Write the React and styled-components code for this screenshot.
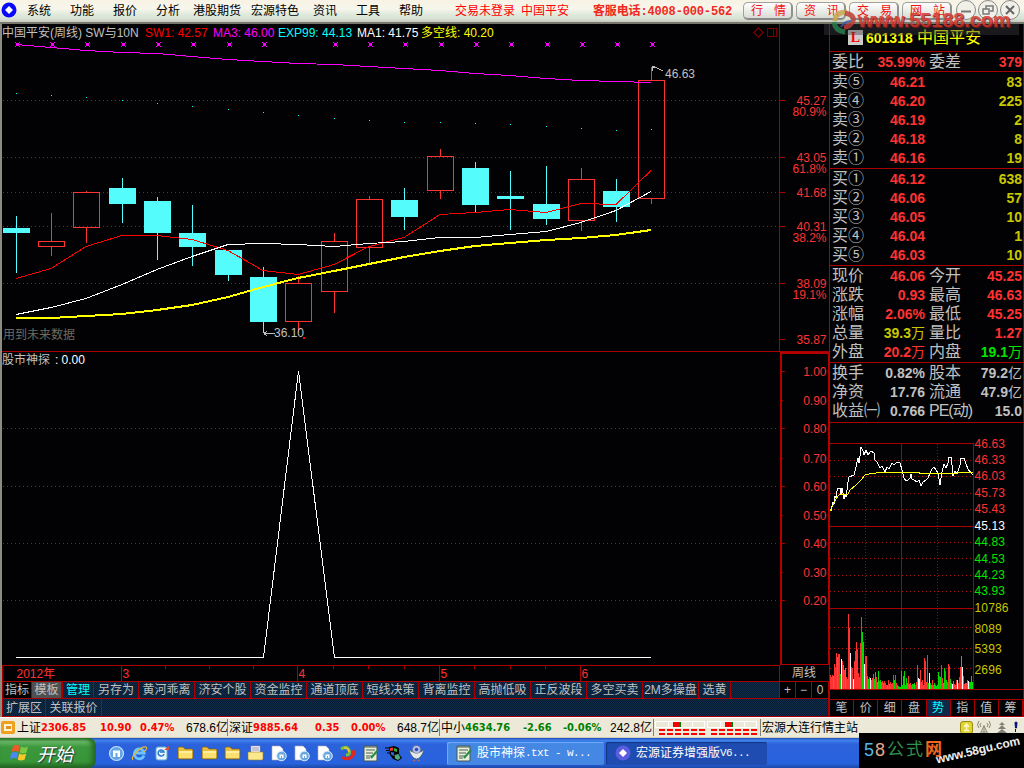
import React from 'react';
import styled, { createGlobalStyle } from 'styled-components';

const MENUS = [
  ['系统', 43],
  ['功能', 43],
  ['报价', 43],
  ['分析', 37],
  ['港股期货', 58],
  ['宏源特色', 62],
  ['资讯', 43],
  ['工具', 43],
  ['帮助', 56],
];

const CENTERS = [
  16, 51, 86, 122, 157, 192, 228, 263, 298, 334, 369, 404, 440, 475, 510, 546,
  581, 616, 651,
];

// [direction, high, body top, body bottom, low]
const CANDLES = [
  ['down', 216, 228, 233, 273],
  ['up', 213, 241, 247, 256],
  ['up', 191, 192, 228, 243],
  ['down', 178, 188, 204, 223],
  ['down', 197, 201, 233, 260],
  ['down', 205, 233, 247, 266],
  ['down', 250, 250, 275, 281],
  ['down', 267, 277, 322, 333],
  ['up', 276, 283, 322, 333],
  ['up', 233, 241, 292, 313],
  ['up', 196, 199, 248, 263],
  ['down', 188, 200, 217, 230],
  ['up', 149, 156, 191, 199],
  ['down', 162, 168, 205, 212],
  ['down', 171, 196, 199, 230],
  ['down', 166, 204, 219, 225],
  ['up', 168, 179, 221, 231],
  ['down', 179, 191, 207, 222],
  ['up', 67, 80, 199, 204],
];

const SW1 = [
  278.5, 268.5, 246.5, 235.5, 235.5, 239.5, 250.5, 270.5, 274.5, 264.5, 246.5,
  237.5, 214.5, 212.5, 209.5, 212.5, 203.5, 204.5, 170.5,
];
const MA1 = [
  314.5, 307.5, 298.5, 284.5, 269.5, 256.5, 244.5, 243.5, 244.5, 246.5, 243.5,
  241.5, 237.5, 237.5, 234.5, 231.5, 222.5, 210.5, 191.5,
];
const DUOKONG = [
  318, 318, 316, 314, 310, 305, 297, 287, 278, 271, 264, 257, 251, 246, 243,
  240, 238, 235, 230,
];
const MA3 = [
  44.5, 47.5, 50.5, 52.5, 53.5, 56.5, 59.5, 61.5, 63.5, 64.5, 66.5, 68.5, 70.5,
  73.5, 75.5, 78.5, 80.5, 81.5, 82.5,
];
const EXP99 = [
  94, 96, 98, 101, 104, 107, 110, 113, 116, 119, 121, 123, 123, 124, 125, 127,
  129, 131, 130,
];

const PRICE_TICKS = [
  [100, '45.27', '80.9%'],
  [157, '43.05', '61.8%'],
  [192, '41.68', ''],
  [226, '40.31', '38.2%'],
  [283, '38.09', '19.1%'],
  [339, '35.87', ''],
];

const SIGNAL_TICKS = [
  [371, '1.00'],
  [400, '0.90'],
  [428, '0.80'],
  [458, '0.70'],
  [486, '0.60'],
  [515, '0.50'],
  [543, '0.40'],
  [572, '0.30'],
  [600, '0.20'],
];

const TABS = [
  '另存为',
  '黄河乖离',
  '济安个股',
  '资金监控',
  '通道顶底',
  '短线决策',
  '背离监控',
  '高抛低吸',
  '正反波段',
  '多空买卖',
  '2M多操盘',
  '选黄',
];
const TAB_WIDTHS = { 另存为: 45, 选黄: 32 };

const SELLS = [
  ['卖⑤', '46.21', '83'],
  ['卖④', '46.20', '225'],
  ['卖③', '46.19', '2'],
  ['卖②', '46.18', '8'],
  ['卖①', '46.16', '19'],
];
const BUYS = [
  ['买①', '46.12', '638'],
  ['买②', '46.06', '57'],
  ['买③', '46.05', '10'],
  ['买④', '46.04', '1'],
  ['买⑤', '46.03', '10'],
];
const RED = '#ff3232';
const GRAY = '#c0c0c0';
const OLIVE = '#c8c800';
const QUOTES = [
  ['现价', '46.06', RED, '今开', '45.25', RED],
  ['涨跌', '0.93', RED, '最高', '46.63', RED],
  ['涨幅', '2.06%', RED, '最低', '45.25', RED],
  ['总量', '39.3万', OLIVE, '量比', '1.27', RED],
  ['外盘', '20.2万', RED, '内盘', '19.1万', '#00e600'],
];
const BASICS = [
  ['换手', '0.82%', GRAY, '股本', '79.2亿', GRAY],
  ['净资', '17.76', GRAY, '流通', '47.9亿', GRAY],
  ['收益㈠', '0.766', GRAY, 'PE(动)', '15.0', GRAY],
];

const MINUTE_PRICE =
  '829,518 830,510 831,511 833,502 834,504 835,496 836,498 837,491 838,488 840,488 841,494 842,488 843,493 844,499 845,495 846,497 847,490 848,482 849,477 854,475 856,467 857,462 858,458 859,463 860,456 861,447 863,451 864,455 866,450 868,455 871,451 874,453 875,460 877,462 880,468 882,466 885,472 887,467 889,469 892,463 894,465 897,462 900,463 902,470 904,478 906,481 908,480 910,478 911,474 912,479 914,480 917,482 919,480 921,486 923,482 926,480 928,478 930,473 932,469 934,467 936,470 938,473 940,485 942,472 944,464 946,468 948,463 949,457 951,457 952,465 953,476 955,471 957,474 960,465 961,458 964,458 966,464 968,469 971,473 973,475';
const MINUTE_AVG =
  '829,513 833,505 836,499 839,495 844,494 848,494 850,490 856,485 861,480 865,475 871,473.5 882,472.5 919,472.5 920,473.5 957,473.5 958,472.5 973,472.5';

const MINUTE_TICKS = [
  [443, '46.63', RED],
  [459, '46.33', RED],
  [475, '46.03', RED],
  [492, '45.73', RED],
  [508, '45.43', RED],
  [525, '45.13', '#fff'],
  [541, '44.83', '#00e600'],
  [558, '44.53', '#00e600'],
  [574, '44.23', '#00e600'],
  [590, '43.93', '#00e600'],
  [607, '10786', OLIVE],
  [628, '8089', OLIVE],
  [648, '5393', OLIVE],
  [669, '2696', OLIVE],
];

const VOLUMES =
  'g18 r14 r12 r14 g13 r25 r22 r36 g32 r35 r35 g15 w30 r28 g24 r19 g21 r12 r10 r75 r61 w36 r22 r21 w10 r28 r38 r47 r40 r16 r12 r46 r72 g57 g47 w25 r33 r33 g13 g10 r12 w11 g9 r11 r15 g10 g17 r12 g7 g18 r8 g9 g7 r8 g6 r8 r6 r4 g4 r9 g5 r7 r5 r6 r14 g9 r14 r6 r4 g3 g2 g2 g18 g4 g13 g18 g4 g11 g6 r13 g5 r6 r4 g5 r5 g6 r4 r7 r24 w11 w10 r19 g7 r9 g4 r31 r28 r7 r34 g6 w16 g6 g4 r9 r4 g6 g4 g3 g4 g17 r13 g12 r24 r11 g6 g21 r18 g9 r7 r25 r23 g10 g6 w5 g8 r5 g4 r9 w9 r6 r12 r22 g33 w22 g13 r5 g6 r6 g9 w8 g7 g7 g13 g7'.split(
    ' ',
  );
const VOLUME_COLORS = { r: RED, g: '#00dc00', w: '#ffffff' };

const points = values => values.map((y, i) => `${CENTERS[i]},${y}`).join(' ');

function MainChart() {
  return (
    <Chart width="827" height="327" viewBox="2 24 827 327">
      {PRICE_TICKS.slice(0, 5).map(([y]) => (
        <Dots key={y} x1="3" x2="779" y1={y + 0.5} y2={y + 0.5} />
      ))}
      {CANDLES.map(([dir, high, top, bottom, low], i) => {
        const x = CENTERS[i];
        if (dir === 'down') {
          return (
            <g key={x} fill="#54fcfc">
              <rect x={x} y={high} width="1" height={low - high} />
              <rect x={x - 13} y={top} width="27" height={bottom - top} />
            </g>
          );
        }
        return (
          <g key={x} fill={RED}>
            <rect x={x} y={high} width="1" height={top - high} />
            <rect x={x} y={bottom} width="1" height={low - bottom} />
            <rect
              x={x - 12.5}
              y={top + 0.5}
              width="26"
              height={bottom - top - 1}
              fill="none"
              stroke={RED}
            />
          </g>
        );
      })}
      {CENTERS.map((x, i) => (
        <rect key={x} x={x} y={EXP99[i] - 1} width="1" height="1" fill="#0ff" />
      ))}
      {CENTERS.filter(x => x !== 298).map(x => (
        <g key={x} fill="#f0f">
          <rect x={x} y="43" width="3" height="3" />
          <path d="M-1 -1h1v1h-1zM3 -1h1v1h-1zM-1 3h1v1h-1zM3 3h1v1h-1z" transform={`translate(${x} 43)`} />
        </g>
      ))}
      <Line points={points(MA3)} stroke="#f0f" />
      <Line points={points(SW1)} stroke="#f00" />
      <Line points={points(MA1)} stroke="#fff" />
      <Line points={points(DUOKONG)} stroke="#ff0" strokeWidth="2" />
      <path d="M652.500 71v-4l2.500-1M652 67l5 1 6 3" fill="none" stroke={GRAY} />
      <ChartText x="665" y="78" fill={GRAY}>46.63</ChartText>
      <path d="M264 333.500h11M264 333.500l3-2.500M264 333.500l3 2.500" fill="none" stroke={GRAY} />
      <ChartText x="274" y="337" fill={GRAY}>36.10</ChartText>
      <rect x="303" y="337" width="2" height="2" fill="#f00" />
      <ChartText x="3" y="338.500" fill="#6c6c60">用到未来数据</ChartText>
      <path d="M758.500 28l4.500 4.500-4.500 4.500-4.500-4.500zM767.500 28.500h9v8h-9zM773.500 28v9" fill="none" stroke="#700000" />
      <rect x="779" y="24" width="1" height="327" fill="#a80000" />
      {PRICE_TICKS.map(([y, price, percent]) => (
        <g key={y} fill={RED}>
          <rect x="780" y={y} width="5" height="1" fill="#a80000" />
          <ChartText x="826.500" y={y + 5} textAnchor="end">{price}</ChartText>
          <ChartText x="826.500" y={y + 16} textAnchor="end">{percent}</ChartText>
        </g>
      ))}
    </Chart>
  );
}

function SignalChart() {
  return (
    <Chart width="827" height="314" viewBox="2 351 827 314">
      <rect x="2" y="351" width="827" height="1" fill="#a80000" />
      {[428, 486, 543, 600].map(y => (
        <Dots key={y} x1="3" x2="779" y1={y + 0.5} y2={y + 0.5} />
      ))}
      <ChartText x="2" y="364" fill={GRAY}>股市神探</ChartText>
      <ChartText x="55" y="364" fill="#fff">:</ChartText>
      <ChartText x="61.500" y="364" fill="#fff">0.00</ChartText>
      <Line points="16,657.5 263.5,657.5 298.5,371 334.5,657.5 651,657.5" stroke="#fff" />
      <rect x="781" y="353" width="48" height="312" fill="none" stroke="#b40000" strokeWidth="2" />
      {SIGNAL_TICKS.map(([y, label], i) => (
        <g key={y} fill={RED}>
          <rect x="782" y={y} width={i % 2 ? 1 : 3} height="1" fill="#a80000" />
          <ChartText x="826.500" y={y + 5} textAnchor="end">{label}</ChartText>
        </g>
      ))}
    </Chart>
  );
}

function TimeAxis() {
  return (
    <Chart width="777" height="16" viewBox="2 665 777 16">
      <path d="M2 665.500h777M2.500 665v16M121.500 665v16M297.500 665v16M439.500 665v16M580.500 665v16M165.500 665v4M209.500 665v4M253.500 665v4M333.500 665v4M368.500 665v4M404.500 665v4M474.500 665v4M510.500 665v4M545.500 665v4" stroke="#a80000" />
      <ChartText x="16.500" y="678" fill={RED}>2012年</ChartText>
      <ChartText x="122.500" y="678" fill={RED}>3</ChartText>
      <ChartText x="298.500" y="678" fill={RED}>4</ChartText>
      <ChartText x="440.500" y="678" fill={RED}>5</ChartText>
      <ChartText x="581.500" y="678" fill={RED}>6</ChartText>
    </Chart>
  );
}

function MinuteChart() {
  return (
    <Chart width="193" height="276" viewBox="830 423 193 276">
      {[460, 476, 493, 509, 542, 558, 575, 591, 627, 648, 668].map(y => (
        <Dots key={y} x1="830" x2="973" y1={y + 0.5} y2={y + 0.5} />
      ))}
      <path d="M865.500 444v245M937.500 444v245" stroke="#a80000" strokeDasharray="1 2" />
      <path d="M829 443.500h145M829 526.500h145M829 608.500h145M829 689.500h194M901.500 443v246M973.500 443v246" stroke="#a80000" />
      {VOLUMES.map((bar, i) => (
        <rect
          key={i}
          x={829 + i}
          y={689 - bar.slice(1)}
          width="1"
          height={bar.slice(1)}
          fill={VOLUME_COLORS[bar[0]]}
        />
      ))}
      <Line points={MINUTE_PRICE} stroke="#fff" />
      <Line points={MINUTE_AVG} stroke="#ff0" />
      {MINUTE_TICKS.map(([y, label, color]) => (
        <ChartText key={y} x="974.500" y={y + 5} fill={color} textLength={label.length * 6.8 - (label.includes('.') ? 3.5 : 0)}>
          {label}
        </ChartText>
      ))}
    </Chart>
  );
}

function Amount({ color, children }) {
  const unit = children.match(/[万亿]$/);
  return (
    <Value $color={color}>
      {unit ? children.slice(0, -1) : children}
      {unit && <Unit>{unit[0]}</Unit>}
    </Value>
  );
}

function QuoteBlock({ rows, pad = 1 }) {
  return (
    <Block $pad={pad}>
      {rows.map(([a, b, bColor, c, d, dColor]) => (
        <QuoteRow key={a}>
          <Label>{a}</Label>
          <Amount color={bColor}>{b}</Amount>
          <Label $tight={c.startsWith('PE')}>{c}</Label>
          <Amount color={dColor}>{d}</Amount>
        </QuoteRow>
      ))}
    </Block>
  );
}

function DepthBlock({ rows }) {
  return (
    <Block $pad={1}>
      {rows.map(([name, price, volume]) => (
        <QuoteRow key={name}>
          <Label>{name}</Label>
          <Value $color={RED}>{price}</Value>
          <span />
          <Value $color={OLIVE}>{volume}</Value>
        </QuoteRow>
      ))}
    </Block>
  );
}

function Folder() {
  return (
    <svg width="17" height="16" viewBox="0 0 17 16">
      <path d="M1 4V3l1-1h4l2 2h7l1 1v8l-1 1H2l-1-1z" fill="#e8bd3c" stroke="#806010" strokeWidth=".7" />
      <path d="M2 6h13v7H2z" fill="#fff0a0" />
      <path d="M2 8h13v5H2z" fill="#fbe070" />
    </svg>
  );
}

function DocIcon() {
  return (
    <svg width="17" height="17" viewBox="0 0 17 17">
      <path d="M2 1h8l3 3v11H2z" fill="#fff" stroke="#aab" strokeWidth=".6" />
      <circle cx="11.500" cy="11" r="4.800" fill="#6aa8e0" stroke="#d8ecff" />
      <path d="M9.500 13V9.500h4V13h-1.500v-2h-1v2z" fill="#fff" />
    </svg>
  );
}

function NoteIcon() {
  return (
    <svg width="16" height="17" viewBox="0 0 16 17">
      <path d="M1 1h13v15H1z" fill="#e8eedc" stroke="#455" />
      <path d="M1 2h13M3 5h9M3 8h7M3 11h7M3 13h4" stroke="#486050" strokeWidth="1.200" />
      <path d="M8 13l7-8" stroke="#2a8a40" strokeWidth="2" />
    </svg>
  );
}

function BirdIcon() {
  return (
    <svg width="17" height="17" viewBox="0 0 17 17">
      <path d="M1 4q2 3 4 3h7q2 0 4-3-1 5-3 7-2 3-4.500 3T4 11Q2 9 1 4z" fill="#e4e8ea" stroke="#466" strokeWidth=".8" />
      <circle cx="8.500" cy="4.500" r="4" fill="#b8c0e8" stroke="#667" strokeWidth=".5" />
      <circle cx="8.500" cy="4.500" r="1.800" fill="#3448c0" />
      <path d="M5 15.500h2.500M9.500 15.500H12" stroke="#c06040" strokeWidth="1.500" />
    </svg>
  );
}

function QuickLaunch() {
  return (
    <Quick>
      <svg width="17" height="17" viewBox="0 0 17 17">
        <circle cx="8.500" cy="8.500" r="7" fill="#64a4e4" stroke="#c0e0ff" strokeWidth="1.200" />
        <path d="M5 12V5.500h7V12H9.500V8h-2v4z" fill="#fff" />
      </svg>
      <svg width="17" height="17" viewBox="0 0 17 17">
        <path d="M13 10.500A5 5 0 1 1 13.200 8H5" fill="none" stroke="#6cc4ff" strokeWidth="2.800" />
        <path d="M2 15C-1 12 10 1 15 2c2 1-1 4-2 5" fill="none" stroke="#e8b830" strokeWidth="1.200" />
      </svg>
      <svg width="17" height="17" viewBox="0 0 17 17">
        <rect x="2" y="2" width="11" height="13" rx="2" fill="#e8f4ff" stroke="#6ac" />
        <path d="M10 9a3 3 0 1 1 0-2H6" fill="none" stroke="#2878c8" strokeWidth="1.500" />
        <path d="M10 5l5-4v4z" fill="#e05030" />
      </svg>
      <Folder />
      <Folder />
      <Folder />
      <svg width="17" height="17" viewBox="0 0 17 17">
        <path d="M4 1h9v8H4z" fill="#fff" stroke="#99a" strokeWidth=".6" />
        <path d="M5 3h7M5 5h7" stroke="#88a" />
        <path d="M1 7h15v7l-1 1H2l-1-1z" fill="#fbe88c" stroke="#a08030" strokeWidth=".6" />
      </svg>
      <DocIcon />
      <DocIcon />
      <DocIcon />
      <svg width="17" height="17" viewBox="0 0 17 17" fill="none" strokeWidth="3">
        <path d="M2 4q6-4 8 1t-3 5" stroke="#7ac040" />
        <path d="M14 5q2 6-3 8t-8-1" stroke="#e02820" />
        <path d="M5 3q5 0 5 4" stroke="#f0d030" strokeWidth="1.500" />
      </svg>
      <NoteIcon />
      <svg width="17" height="17" viewBox="0 0 17 17">
        <path d="M0 3h4M1 5.500h3M2 8h3" stroke="#000" strokeWidth="1.200" />
        <path d="M4 2l5-1 5 2v6l3 4-4 3-5-2-3-4z" fill="#000" />
        <path d="M5 3l3-.5v3L5 6z" fill="#f03820" />
        <path d="M9 3l3 1v3L9 6z" fill="#30b040" />
        <path d="M6 7l3 .5V11L6 9.500z" fill="#3060f0" />
        <path d="M9.500 10l4-1 2 4-2.500 2-3-1.500z" fill="#50a880" />
      </svg>
      <BirdIcon />
    </Quick>
  );
}

function Meter({ x }) {
  return (
    <svg width="52" height="16" viewBox="0 0 52 16" shapeRendering="crispEdges">
      <path d="M.5 1.500h49v6H.5zM13.500 1v6M37.500 1v6" fill="none" stroke="#fff" />
      <rect x={x} y="2" width="6" height="5" fill="#f00000" />
      <rect x={x + 6} y="2" width="2" height="5" fill="#008000" />
      <path d="M4 10h46M4 14h46" stroke="#f00" strokeWidth="2" strokeDasharray="6 2" />
    </svg>
  );
}

export default function App() {
  return (
    <Screen>
      <GlobalStyle />
      <MenuBar>
        <LogoSlot>
          <svg width="16" height="16" viewBox="0 0 16 16">
            <circle cx="8" cy="8" r="7.500" fill="#0808ff" />
            <path d="M8 4l4 4-4 4-4-4z" fill="#fff" />
          </svg>
        </LogoSlot>
        {MENUS.map(([name, width]) => (
          <MenuItem key={name} $width={width}>{name}</MenuItem>
        ))}
        <MenuItem $width={66} $color="#f00">交易未登录</MenuItem>
        <MenuItem $width={72} $color="#f00">中国平安</MenuItem>
        <Hotline>客服电话:4008-000-562</Hotline>
        <NavButtons>
          <NavButton><span>行</span><span>情</span></NavButton>
          <NavButton><span>资</span><span>讯</span></NavButton>
          <NavButton><span>交</span><span>易</span></NavButton>
          <NavButton><span>网</span><span>站</span></NavButton>
        </NavButtons>
        <WindowButtons>
          <WindowButton>
            <svg width="12" height="12"><path d="M1 7.500h10" stroke="#777" strokeWidth="2" /></svg>
          </WindowButton>
          <WindowButton>
            <svg width="12" height="12" fill="none" stroke="#777" strokeWidth="1.500">
              <path d="M1 5h6v5H1zM4 5V2h7v5H8" />
            </svg>
          </WindowButton>
          <WindowButton>
            <svg width="12" height="12"><path d="M2 2l8 8M10 2l-8 8" stroke="#666" strokeWidth="2" /></svg>
          </WindowButton>
        </WindowButtons>
      </MenuBar>

      <Workspace>
        <Charts>
          <ChartPanel>
            <Legend>
              <LegendItem $color={GRAY} $width={143}>中国平安(周线) SW与10N</LegendItem>
              <LegendItem $color="#f00" $width={68}>SW1: 42.57</LegendItem>
              <LegendItem $color="#f0f" $width={65}>MA3: 46.00</LegendItem>
              <LegendItem $color="#0ff" $width={79}>EXP99: 44.13</LegendItem>
              <LegendItem $color="#fff" $width={64}>MA1: 41.75</LegendItem>
              <LegendItem $color="#ff0" $width={80}>多空线: 40.20</LegendItem>
            </Legend>
            <MainChart />
          </ChartPanel>
          <SignalChart />
          <AxisRow>
            <TimeAxis />
            <Period>周线</Period>
          </AxisRow>
          <TabRow>
            <Tab $width={29} $bg="#000">指标</Tab>
            <Tab $width={31} $bg="#505050" $thick>模板</Tab>
            <Tab $width={31} $color="#0ff">管理</Tab>
            {TABS.map(name => (
              <Tab key={name} $width={TAB_WIDTHS[name] || 56}>{name}</Tab>
            ))}
            <TabFill />
            <Tab $width={16} $bg="#000">+</Tab>
            <Tab $width={16} $bg="#000">−</Tab>
            <Tab $width={17} $bg="#000">0</Tab>
          </TabRow>
          <TabRow $tall>
            <Tab $width={43}>扩展区</Tab>
            <Tab $width={56}>关联报价</Tab>
            <TabFill />
          </TabRow>
        </Charts>

        <Side>
          <StockTitle>
            <Level>L</Level>
            <Code>601318</Code>
            <StockName>中国平安</StockName>
          </StockTitle>
          <QuoteBlock rows={[['委比', '35.99%', RED, '委差', '379', RED]]} pad={0} />
          <DepthBlock rows={SELLS} />
          <DepthBlock rows={BUYS} />
          <QuoteBlock rows={QUOTES} />
          <QuoteBlock rows={BASICS} pad={2} />
          <MinuteChart />
          <SideTabs>
            {['笔', '价', '细', '盘', '势', '指', '值', '筹'].map(name => (
              <SideTab key={name} $active={name === '势'}>{name}</SideTab>
            ))}
          </SideTabs>
        </Side>
      </Workspace>

      <StatusBar>
        <StatusIcon>
          <svg width="14" height="14" viewBox="0 0 14 14">
            <rect width="14" height="13" rx="2" fill="#f0a020" />
            <path d="M3 3h8v7H3z" fill="#fff4d0" />
            <path d="M5 5h5v3H5z" fill="#e09020" />
          </svg>
        </StatusIcon>
        <StatusText $width={24}>上证</StatusText>
        <StatusNumber $width={59}>2306.85</StatusNumber>
        <StatusNumber $width={40}>10.90</StatusNumber>
        <StatusNumber $width={46}>0.47%</StatusNumber>
        <StatusText $width={40}>678.6亿</StatusText>
        <Divider />
        <StatusText $width={24}>深证</StatusText>
        <StatusNumber $width={62}>9885.64</StatusNumber>
        <StatusNumber $width={36}>0.35</StatusNumber>
        <StatusNumber $width={46}>0.00%</StatusNumber>
        <StatusText $width={41}>648.7亿</StatusText>
        <Divider />
        <StatusText $width={24}>中小</StatusText>
        <StatusNumber $width={58} $down>4634.76</StatusNumber>
        <StatusNumber $width={40} $down>-2.66</StatusNumber>
        <StatusNumber $width={47} $down>-0.06%</StatusNumber>
        <StatusText $width={42}>242.8亿</StatusText>
        <Divider />
        <Meter x={18} />
        <Meter x={18} />
        <Divider />
        <StatusText $width={198}>宏源大连行情主站</StatusText>
        <svg width="62" height="14" viewBox="0 0 62 14">
          <rect x=".5" y=".5" width="12" height="12" rx="2.500" fill="#e0d430" stroke="#988c10" />
          <path d="M6.500 3v7M4 6l2.500-3L9 6M4 9.500h5" stroke="#fff8c0" strokeWidth="1.500" fill="none" />
          <path d="M24 4v9M24 5l-4 8M24 5l4 8M21 11h6M21 2q-2 2 0 4M27 2q2 2 0 4M19 0q-3 4 0 7M29 0q3 4 0 7" stroke="#888870" fill="none" />
          <path d="M42 1l3 3h-6zM42 4l4 4h-8zM42 8l5 4H37zM41 11h2v3h-2z" fill="#808078" />
          <path d="M55 2q0-1 1-1t1 1l-.5 5h-1zM55.500 8v3" fill="#001080" stroke="#001080" />
        </svg>
      </StatusBar>

      <Taskbar>
        <Start>
          <svg width="20" height="20" viewBox="0 0 20 20">
            <path d="M3 3q4-2 7 0L8.500 9Q5 7 1.500 9z" fill="#f05828" />
            <path d="M11 3.500q3 2 7 0L16.500 9.500q-4 2-7 0z" fill="#7cc840" />
            <path d="M1.200 10q4-2 7 0L6.700 16Q4 14 0 16z" fill="#4888f0" />
            <path d="M9.200 10.500q3 2 7 0L14.700 16.500q-4 2-7 0z" fill="#f8c828" />
          </svg>
          开始
        </Start>
        <QuickLaunch />
        <Task $width={157} $light>
          <NoteIcon />
          股市神探<em>.txt - w...</em>
        </Task>
        <Task $width={161}>
          <svg width="16" height="16" viewBox="0 0 16 16">
            <circle cx="8" cy="8" r="7.500" fill="#5c5ce0" />
            <path d="M8 4l4 4-4 4-4-4z" fill="#fff" />
          </svg>
          宏源证券增强版<em>V6...</em>
        </Task>
      </Taskbar>

      <SiteMark>
        <svg width="27" height="28" viewBox="0 0 27 28" fill="none" strokeWidth="5">
          <path d="M4 13Q4 4 16 4" stroke="#c8a850" />
          <path d="M3 14q1 9 11 10" stroke="#2c8050" />
          <path d="M14 5q10 2 8 8-3 6-9 6" stroke="#c04038" />
          <path d="M10 19q4-6 10-6" stroke="#3858b0" strokeWidth="2" />
        </svg>
        <span>www.55188.com</span>
      </SiteMark>

      <FormulaMark>
        <FormulaName>
          <b>5</b><b>8</b><i>公式</i><strong>网</strong>
        </FormulaName>
        <FormulaUrl>www.58gu.com</FormulaUrl>
      </FormulaMark>
    </Screen>
  );
}

const GlobalStyle = createGlobalStyle`
  * {
    box-sizing: border-box;
  }

  body {
    margin: 0;
    background: #000;
    overflow: hidden;
  }
`;

const Screen = styled.div`
  position: relative;
  width: 1024px;
  height: 768px;
  display: flex;
  flex-direction: column;
  overflow: hidden;
  background: #020204;
  font: 12px/14px 'Liberation Sans', 'Noto Sans CJK SC', sans-serif;
  white-space: nowrap;
`;

const MenuBar = styled.header`
  display: flex;
  align-items: center;
  height: 24px;
  flex: none;
  border-bottom: 2px solid #77776c;
  background: linear-gradient(#f7f2e4, #f8f6ec 40%, #e0eadc 65%, #d8e2d4 85%, #c8c8c0);
  color: #000;
`;

const LogoSlot = styled.div`
  display: flex;
  width: 27px;
  padding-left: 1px;
  margin-top: -3px;
`;

const MenuItem = styled.div`
  width: ${({ $width }) => $width}px;
  flex: none;
  color: ${({ $color }) => $color || '#000'};
`;

const Hotline = styled.div`
  width: 150px;
  flex: none;
  padding-top: 2px;
  color: #f02820;
  font: bold 12px/14px 'Liberation Mono', 'Noto Sans CJK SC', monospace;
  letter-spacing: -0.15px;
`;

const NavButtons = styled.div`
  display: flex;
  gap: 3px;
  width: 213px;
  flex: none;
`;

const NavButton = styled.button`
  display: flex;
  justify-content: space-between;
  align-items: center;
  width: 50px;
  height: 18px;
  padding: 0 5px 0 7px;
  border: 1px solid #a0a09c;
  border-right: 2px solid #909090;
  border-bottom: 2px solid #888;
  border-radius: 5px;
  background: linear-gradient(#fff, #d8dcd4);
  color: #f01010;
  font: inherit;
`;

const WindowButtons = styled.div`
  display: flex;
  gap: 2px;
  margin-top: -2px;
`;

const WindowButton = styled.button`
  display: flex;
  justify-content: center;
  align-items: center;
  width: 20px;
  height: 20px;
  padding: 0;
  border: 1px solid #888;
  border-radius: 50%;
  background: #f0f0e8;
`;

const Workspace = styled.main`
  display: flex;
  height: 693px;
  flex: none;
`;

const Charts = styled.section`
  width: 829px;
  flex: none;
  border-left: 2px solid #8c8c80;
`;

const ChartPanel = styled.div`
  position: relative;
  height: 327px;
`;

const Legend = styled.div`
  position: absolute;
  top: 2px;
  left: 0;
  display: flex;
`;

const LegendItem = styled.span`
  width: ${({ $width }) => $width}px;
  color: ${({ $color }) => $color};
`;

const Chart = styled.svg`
  display: block;
  flex: none;
  shape-rendering: crispEdges;
`;

const Line = styled.polyline`
  fill: none;
`;

const Dots = styled.line`
  stroke: #b01010;
  stroke-dasharray: 1 3;
`;

const ChartText = styled.text`
  font: 12px 'Liberation Sans', 'Noto Sans CJK SC', sans-serif;
`;

const AxisRow = styled.div`
  display: flex;
  height: 16px;
`;

const Period = styled.div`
  flex: 1;
  border-left: 1px solid #a80000;
  padding: 1px 0 0 12px;
  color: ${GRAY};
`;

const TabRow = styled.div`
  display: flex;
  height: ${({ $tall }) => ($tall ? 19 : 17)}px;
  border-top: 1px solid #a80000;
  border-left: 1px solid #a80000;
  ${({ $tall }) => $tall && 'border-bottom: 1px solid #a80000;'}
  background: repeating-conic-gradient(#102c4c 0 25%, #081c30 0 50%) 0 0 / 2px 2px;
`;

const Tab = styled.div`
  width: ${({ $width }) => $width}px;
  flex: none;
  display: flex;
  justify-content: center;
  align-items: center;
  border-right: ${({ $thick }) => ($thick ? 2 : 1)}px solid #a80000;
  background: ${({ $bg }) => $bg || 'transparent'};
  color: ${({ $color }) => $color || GRAY};
`;

const TabFill = styled.div`
  flex: 1;
  border-right: 1px solid #a80000;
`;

const Side = styled.aside`
  display: flex;
  flex-direction: column;
  width: 195px;
  border-left: 1px solid #b40000;
  border-right: 1px solid #900000;
`;

const StockTitle = styled.div`
  display: flex;
  align-items: center;
  height: 28px;
  padding-left: 18px;
  border-bottom: 1px solid #a80000;
  color: #ff0;
`;

const Level = styled.div`
  width: 15px;
  height: 15px;
  background: #ccc;
  color: #f00;
  text-align: center;
  font: bold 14px/15px 'Liberation Serif', serif;
`;

const Code = styled.div`
  width: 54px;
  padding-left: 3px;
  font-size: 14px;
  font-weight: bold;
`;

const StockName = styled.div`
  font-size: 16px;
  line-height: 20px;
`;

const Block = styled.div`
  display: flex;
  flex-direction: column;
  padding: 0 2px ${({ $pad }) => $pad}px;
  border-bottom: 1px solid #a80000;
`;

const QuoteRow = styled.div`
  display: grid;
  grid-template-columns: 40px 53px 44px 53px;
  align-items: center;
  height: 19px;

  > :nth-child(3) {
    padding-left: 4px;
  }
`;

const Label = styled.span`
  color: ${GRAY};
  font-size: 16px;
  line-height: 19px;
  letter-spacing: ${({ $tight }) => ($tight ? '-1px' : 0)};
`;

const Value = styled.span`
  display: flex;
  justify-content: flex-end;
  color: ${({ $color }) => $color};
  font-size: 14px;
  font-weight: bold;
`;

const Unit = styled.span`
  width: 14px;
  font-weight: normal;
`;

const SideTabs = styled.div`
  display: grid;
  grid-template-columns: repeat(8, 1fr);
  flex: 1;
  border-top: 1px solid #a80000;
  border-bottom: 1px solid #a80000;
`;

const SideTab = styled.div`
  display: flex;
  justify-content: center;
  align-items: center;
  border-right: 1px solid #a80000;
  background: ${({ $active }) => ($active ? '#102848' : 'transparent')};
  color: ${({ $active }) => ($active ? '#0ff' : GRAY)};
`;

const StatusBar = styled.div`
  display: flex;
  align-items: center;
  height: 21px;
  flex: none;
  border-top: 1px solid #fff;
  border-bottom: 1px solid #d0ccb8;
  background: #ece9d8;
  color: #000;
`;

const StatusIcon = styled.div`
  display: flex;
  width: 17px;
  padding-left: 1px;
`;

const StatusText = styled.span`
  width: ${({ $width }) => $width}px;
  flex: none;
`;

const StatusNumber = styled.span`
  width: ${({ $width }) => $width}px;
  flex: none;
  color: ${({ $down }) => ($down ? '#008000' : '#f00')};
  font: bold 11px/14px 'DejaVu Sans Condensed', 'DejaVu Sans', sans-serif;
`;

const Divider = styled.i`
  width: 1px;
  height: 17px;
  margin: 0 1px;
  flex: none;
  background: #808078;
`;

const Taskbar = styled.footer`
  display: flex;
  flex: 1;
  align-items: center;
  background: linear-gradient(#2050b8, #4080ec 8%, #2c62dc 20%, #2862dc 85%, #1c48a8);
  color: #fff;
`;

const Start = styled.button`
  display: flex;
  align-items: center;
  gap: 7px;
  width: 96px;
  height: 30px;
  flex: none;
  padding: 0 0 0 10px;
  border: 0;
  border-radius: 0 8px 8px 0;
  background: linear-gradient(#2c7a2c, #68b868 12%, #3c983c 30%, #389438 80%, #206420);
  box-shadow: inset -4px 0 5px #246824;
  color: #fff;
  font: italic 18px/24px 'Noto Sans CJK SC', sans-serif;
  text-shadow: 1px 1px 1px #234;
`;

const Quick = styled.div`
  display: flex;
  justify-content: space-between;
  align-items: center;
  width: 317px;
  margin: 0 22px 0 12px;
  flex: none;
`;

const Task = styled.div`
  display: flex;
  align-items: center;
  width: ${({ $width }) => $width}px;
  height: 23px;
  flex: none;
  margin-right: 2px;
  padding-left: 9px;
  border-radius: 2px;
  background: ${({ $light }) => ($light ? '#4488e4' : '#1e4cb0')};
  box-shadow: inset 1px 1px 1px ${({ $light }) => ($light ? '#70b0f8' : '#143684')};

  svg {
    margin-right: 5px;
  }

  em {
    font: 11px 'Liberation Mono', monospace;
    letter-spacing: -0.6px;
  }
`;

const SiteMark = styled.div`
  position: absolute;
  top: 8px;
  left: 824px;
  display: flex;
  width: 195px;
  height: 27px;
  background: linear-gradient(transparent 16px, rgba(60, 60, 66, 0.5) 16px);
  opacity: 0.85;

  svg {
    flex: none;
    margin-left: 7px;
  }

  span {
    color: #d83830;
    font: bold 20px/24px 'Liberation Sans', sans-serif;
    letter-spacing: -0.1px;
    text-shadow: 1px 1px #802020;
  }
`;

const FormulaMark = styled.div`
  position: absolute;
  right: 0;
  bottom: 0;
  width: 165px;
  height: 35px;
  overflow: hidden;
  background: #000;
`;

const FormulaName = styled.div`
  display: flex;
  padding: 7px 0 0 5px;
  font-size: 17px;
  line-height: 20px;

  b {
    width: 11px;
    color: #50b8f0;
    font-size: 18px;
    font-weight: normal;
  }

  b + b {
    color: #e8a888;
  }

  i {
    margin-left: 1px;
    color: #30904c;
    font-style: normal;
    letter-spacing: 2px;
  }

  strong {
    color: #f06820;
  }
`;

const FormulaUrl = styled.div`
  position: absolute;
  left: 76px;
  top: 11px;
  color: #f0f0f0;
  font: bold 12px/12px 'Liberation Sans', sans-serif;
  letter-spacing: -0.1px;
  transform: rotate(-13deg);
`;
